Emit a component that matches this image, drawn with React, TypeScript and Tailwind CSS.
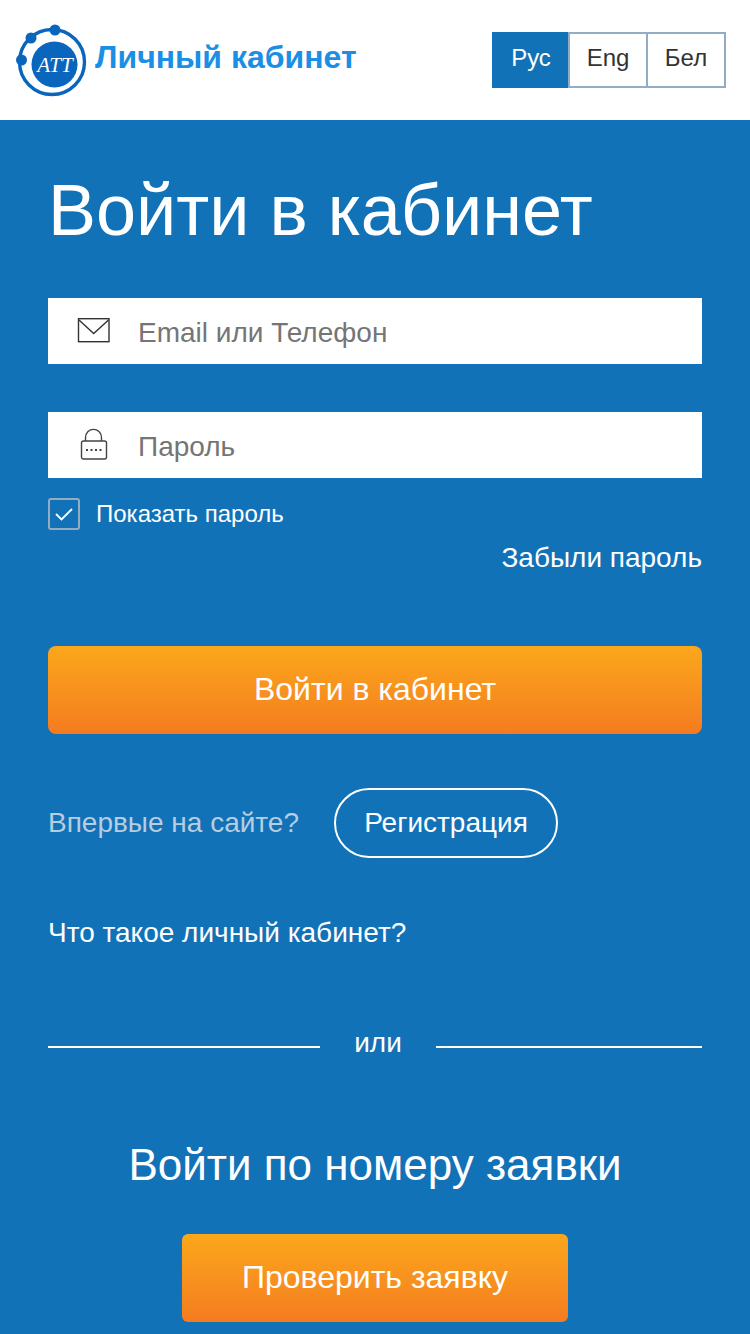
import React from "react";

function Logo() {
  return (
    <svg width="74" height="76" viewBox="0 0 74 76" className="shrink-0" aria-hidden="true">
      <circle cx="38" cy="40" r="32.5" fill="none" stroke="#0a66bd" strokeWidth="3.4" />
      <circle cx="40.5" cy="42.5" r="23" fill="#0a66bd" />
      <circle cx="7.5" cy="38" r="5.5" fill="#0a66bd" />
      <circle cx="17" cy="16" r="5.5" fill="#0a66bd" />
      <circle cx="41" cy="8" r="5.5" fill="#0a66bd" />
      <text x="41" y="50" textAnchor="middle" fontFamily="'Liberation Serif', serif" fontStyle="italic" fontSize="21" fill="#fff">ATT</text>
    </svg>
  );
}

function Mail() {
  return (
    <svg width="34" height="26" viewBox="0 0 34 26" aria-hidden="true">
      <rect x="1.5" y="0.7" width="30.5" height="23" fill="none" stroke="#333" strokeWidth="1.4" />
      <path d="M2 2 L16.7 15.5 L31.5 2" fill="none" stroke="#333" strokeWidth="1.4" />
    </svg>
  );
}

function Lock() {
  return (
    <svg width="28" height="34" viewBox="0 0 28 34" aria-hidden="true">
      <path d="M5.5 13 V10 C5.5 -1.5 21.5 -1.5 21.5 10 V13" fill="none" stroke="#444" strokeWidth="1.4" />
      <rect x="1.5" y="13" width="25" height="18" rx="2" fill="none" stroke="#444" strokeWidth="1.4" />
      <g fill="#444">
        <rect x="6" y="21" width="2" height="2" />
        <rect x="10.5" y="21" width="2" height="2" />
        <rect x="15" y="21" width="2" height="2" />
        <rect x="19.5" y="21" width="2" height="2" />
      </g>
    </svg>
  );
}

function Field({ icon, text, type }: { icon: React.ReactNode; text: string; type: string }) {
  return (
    <label className="flex h-[66px] items-center bg-white">
      <span className="flex w-[90px] shrink-0 justify-center pl-[2px]">{icon}</span>
      <input
        type={type}
        placeholder={text}
        className="h-full min-w-0 flex-1 bg-transparent pt-[4px] text-[28px] outline-none placeholder:text-[#757575]"
      />
    </label>
  );
}

function Lang({ label, active }: { label: string; active?: boolean }) {
  return (
    <div
      className={
        active
          ? "flex h-[56px] w-[78px] items-center justify-center bg-[#1172b8] pb-[4px] text-[24px] text-white"
          : "ml-[-2px] flex h-[56px] w-[80px] items-center justify-center border-2 border-[#92adc3] bg-white pb-[4px] text-[24px] text-[#333]"
      }
    >
      {label}
    </div>
  );
}

export default function App() {
  return (
    <div className="h-[1334px] w-[750px] overflow-hidden bg-[#1172b8] font-['Liberation_Sans',Arial,sans-serif]">
      <header className="flex h-[120px] items-center justify-between bg-white pl-[14px] pr-[24px]">
        <div className="flex items-center">
          <Logo />
          <span className="ml-[7px] mt-[-6px] text-[32px] font-bold text-[#1b8fe6]">Личный кабинет</span>
        </div>
        <div className="flex">
          <Lang label="Рус" active />
          <Lang label="Eng" />
          <Lang label="Бел" />
        </div>
      </header>
      <main className="flex flex-col px-[48px] text-white">
        <h1 className="mt-[48px] text-[72px] leading-[84px]">Войти в кабинет</h1>
        <div className="mt-[46px]">
          <Field icon={<Mail />} text="Email или Телефон" type="text" />
        </div>
        <div className="mt-[48px]">
          <Field icon={<Lock />} text="Пароль" type="password" />
        </div>
        <div className="mt-[20px] flex h-[32px] items-center">
          <div className="flex h-[32px] w-[32px] items-center justify-center rounded-[3px] border-2 border-[#92adc3]">
            <svg width="20" height="16" viewBox="0 0 20 16" aria-hidden="true">
              <path d="M2 8 L7.5 13.5 L18 3" fill="none" stroke="#fff" strokeWidth="1.8" />
            </svg>
          </div>
          <span className="ml-[16px] text-[24px]">Показать пароль</span>
        </div>
        <div className="mt-[12px] text-right text-[28px] leading-[32px]">Забыли пароль</div>
        <button className="mt-[72px] h-[88px] rounded-[8px] bg-gradient-to-b from-[#fba71b] to-[#f47b20] pb-[2px] text-[32px] text-white">
          Войти в кабинет
        </button>
        <div className="mt-[54px] flex items-center">
          <span className="text-[28px] text-[#b7cde0]">Впервые на сайте?</span>
          <div className="ml-[35px] flex h-[70px] w-[224px] items-center justify-center rounded-[35px] border-2 border-white text-[28px]">
            Регистрация
          </div>
        </div>
        <div className="mt-[59px] text-[28px] leading-[32px]">Что такое личный кабинет?</div>
        <div className="mt-[78px] flex items-center">
          <div className="mt-[8px] h-[2px] w-[272px] bg-white" />
          <span className="w-[116px] text-center text-[28px] leading-[32px]">или</span>
          <div className="mt-[8px] h-[2px] w-[266px] bg-white" />
        </div>
        <div className="mt-[80px] text-center text-[44px] leading-[52px]">Войти по номеру заявки</div>
        <button className="mx-auto mt-[43px] h-[88px] w-[386px] rounded-[6px] bg-gradient-to-b from-[#fba71b] to-[#f47b20] pb-[2px] text-[32px] text-white">
          Проверить заявку
        </button>
      </main>
    </div>
  );
}
